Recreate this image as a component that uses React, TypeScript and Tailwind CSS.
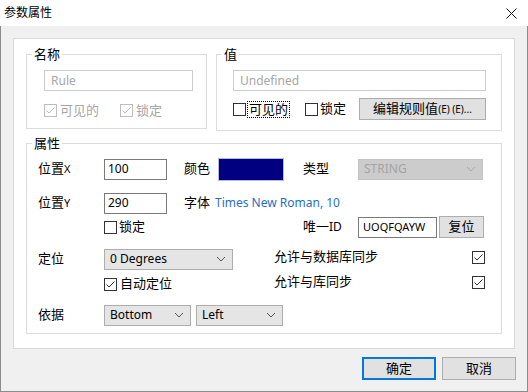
import React from 'react';

const Check = ({ checked = false, disabled = false }: { checked?: boolean; disabled?: boolean }) => (
  <span
    className={`flex w-[13px] h-[13px] shrink-0 items-center justify-center border bg-white ${
      disabled ? 'border-[#bcbcbc]' : 'border-[#333333]'
    }`}
  >
    {checked && (
      <svg width="11" height="11" viewBox="0 0 11 11">
        <polyline
          points="1.5,5.5 4,8 9.5,2.5"
          fill="none"
          stroke={disabled ? '#bcbcbc' : '#333333'}
          strokeWidth="1"
        />
      </svg>
    )}
  </span>
);

const Chevron = ({ color = '#555' }: { color?: string }) => (
  <svg width="10" height="6" viewBox="0 0 10 6">
    <polyline points="1,1 5,5 9,1" fill="none" stroke={color} strokeWidth="1" />
  </svg>
);

const Combo = ({
  value,
  width,
  disabled = false,
}: {
  value: string;
  width: string;
  disabled?: boolean;
}) => (
  <div
    className={`${width} h-[21px] flex items-center justify-between pl-[5px] pr-[6px] border text-[12px] ${
      disabled
        ? 'bg-[#cccccc] border-[#c4c4c4] text-[#a3a3a3]'
        : 'bg-[#e5e5e5] border-[#adadad] text-black'
    }`}
  >
    <span>{value}</span>
    <Chevron color={disabled ? '#a8a8a8' : '#555'} />
  </div>
);

const Group = ({
  title,
  className,
  children,
}: {
  title: string;
  className: string;
  children: React.ReactNode;
}) => (
  <div className={`relative border border-[#dcdcdc] ${className}`}>
    <span className="absolute -top-[9px] left-[5px] px-[2px] bg-white text-[13px] leading-[16px]">
      {title}
    </span>
    {children}
  </div>
);

export default function App() {
  return (
    <div className="w-[528px] h-[392px] flex flex-col font-['Noto_Sans','Noto_Sans_CJK_SC',sans-serif] text-[13px] text-black bg-white">
      <div className="h-[26px] flex items-center justify-between pl-[4px] pr-[11px] bg-white">
        <span className="text-[12px]">参数属性</span>
        <svg width="11" height="11" viewBox="0 0 11 11">
          <path d="M0.5 0.5 L10.5 10.5 M10.5 0.5 L0.5 10.5" stroke="#111" strokeWidth="1" />
        </svg>
      </div>

      <div className="flex-1 flex flex-col bg-[#f0f0f0] border-x border-b border-[#8c8c8c]">
        <div className="ml-[12px] mt-[12px] w-[502px] h-[311px] border border-[#dadada] bg-white pl-[12px] pt-[15px]">
          <div className="flex items-start gap-[9px] h-[77px]">
            <Group title="名称" className="w-[181px] h-[75px] pl-[17px] pt-[15px]">
              <div className="w-[149px] h-[21px] border border-[#cccccc] flex items-center px-[6px] text-[12px] text-[#a6a6a6]">
                Rule
              </div>
              <div className="mt-[9px] h-[21px] flex items-center text-[#a6a6a6]">
                <div className="w-[76px] flex items-center gap-[3px]">
                  <Check checked disabled />
                  <span>可见的</span>
                </div>
                <div className="flex items-center gap-[3px]">
                  <Check checked disabled />
                  <span>锁定</span>
                </div>
              </div>
            </Group>

            <Group title="值" className="w-[286px] h-[77px] pl-[16px] pt-[15px]">
              <div className="w-[253px] h-[21px] border border-[#cccccc] flex items-center px-[6px] text-[12px] text-[#a6a6a6]">
                Undefined
              </div>
              <div className="mt-[7px] h-[22px] flex items-center">
                <div className="w-[72px] flex items-center">
                  <Check />
                  <span className="ml-[1px] border border-dotted border-black leading-[15px] px-[1px]">
                    可见的
                  </span>
                </div>
                <div className="w-[54px] flex items-center gap-[2px]">
                  <Check />
                  <span>锁定</span>
                </div>
                <button className="w-[127px] h-[22px] border border-[#adadad] bg-[#e1e1e1] flex items-center justify-center">
                  <span>编辑规则值</span>
                  <span className="text-[10px]">(E) (E)...</span>
                </button>
              </div>
            </Group>
          </div>

          <Group title="属性" className="mt-[12px] w-[476px] h-[191px] pl-[11px] pt-[13px]">
            <div className="h-[24px] flex items-center">
              <span className="w-[66px]">
                位置<span className="text-[11px]">X</span>
              </span>
              <div className="w-[63px] h-[21px] border border-[#7a7a7a] flex items-center px-[3px] text-[12px]">
                100
              </div>
              <span className="ml-[17px] w-[34px]">颜色</span>
              <div className="w-[66px] h-[23px] bg-[#000080] border border-[#b8b8d8]" />
              <span className="ml-[19px] w-[55px]">类型</span>
              <Combo value="STRING" width="w-[125px]" disabled />
            </div>

            <div className="mt-[11px] h-[22px] flex items-center">
              <span className="w-[66px]">
                位置<span className="text-[11px]">Y</span>
              </span>
              <div className="w-[63px] h-[21px] border border-[#7a7a7a] flex items-center px-[3px] text-[12px]">
                290
              </div>
              <span className="ml-[17px] w-[31px]">字体</span>
              <span className="text-[12px] text-[#1f6fc5]">Times New Roman, 10</span>
            </div>

            <div className="mt-[2px] h-[22px] flex items-center">
              <div className="w-[265px] pl-[66px] flex items-center gap-[2px]">
                <Check />
                <span>锁定</span>
              </div>
              <span className="w-[55px]">
                唯一<span className="text-[12px]">ID</span>
              </span>
              <div className="w-[79px] h-[21px] border border-[#7a7a7a] flex items-center px-[4px] text-[11px]">
                UOQFQAYW
              </div>
              <button className="ml-[2px] w-[45px] h-[22px] border border-[#adadad] bg-[#e1e1e1] flex items-center justify-center">
                复位
              </button>
            </div>

            <div className="mt-[10px] h-[22px] flex items-center">
              <span className="w-[66px]">定位</span>
              <Combo value="0 Degrees" width="w-[129px]" />
              <div className="ml-[41px] w-[198px] -mt-[4px]">
                <span>允许与数据库同步</span>
              </div>
              <div className="-mt-[4px]">
                <Check checked />
              </div>
            </div>

            <div className="mt-[3px] h-[22px] flex items-center">
              <div className="w-[236px] pl-[66px] flex items-center gap-[3px]">
                <Check checked />
                <span>自动定位</span>
              </div>
              <div className="w-[198px] -mt-[4px]">
                <span>允许与库同步</span>
              </div>
              <div className="-mt-[4px]">
                <Check checked />
              </div>
            </div>

            <div className="mt-[9px] h-[22px] flex items-center">
              <span className="w-[66px]">依据</span>
              <Combo value="Bottom" width="w-[87px]" />
              <div className="ml-[5px]">
                <Combo value="Left" width="w-[87px]" />
              </div>
            </div>
          </Group>
        </div>

        <div className="mt-[8px] mr-[11px] flex justify-end gap-[6px]">
          <button className="w-[74px] h-[23px] border-2 border-[#0078d7] bg-[#e1e1e1] flex items-center justify-center">
            确定
          </button>
          <button className="w-[74px] h-[23px] border border-[#adadad] bg-[#e1e1e1] flex items-center justify-center">
            取消
          </button>
        </div>
      </div>
    </div>
  );
}
